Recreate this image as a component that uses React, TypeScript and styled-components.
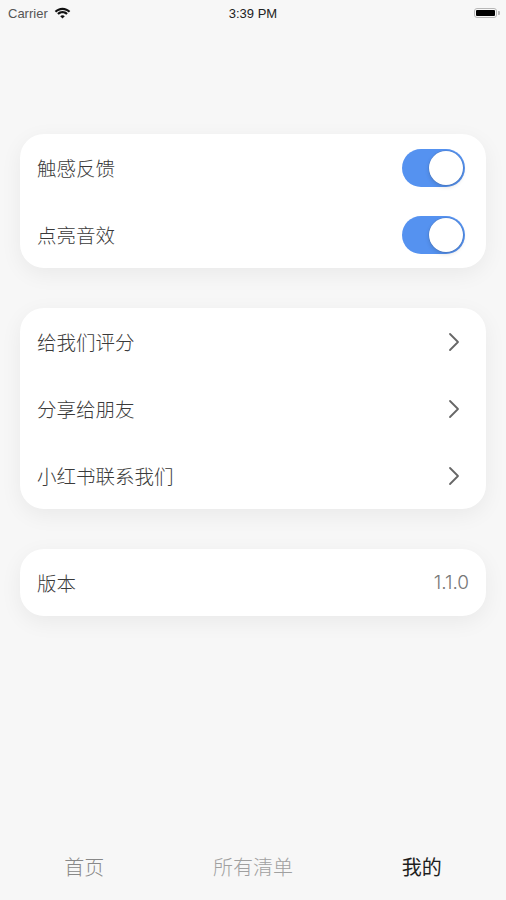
import styled, { createGlobalStyle } from 'styled-components';

const GlobalStyle = createGlobalStyle`
    html, body {
        margin: 0;
        padding: 0;
        background: #f7f7f7;
    }
    body {
        font-family: "Inter", "Noto Sans CJK SC", sans-serif;
    }
`;

const StyledPage = styled.div`
    width: 506px;
    height: 900px;
    display: flex;
    flex-direction: column;
    background: #f7f7f7;
    overflow: hidden;
`;

const StyledStatusBar = styled.div`
    height: 26px;
    display: grid;
    grid-template-columns: 1fr auto 1fr;
    align-items: center;
    padding: 0 8px;
    font-family: "Liberation Sans", sans-serif;
    font-size: 13px;
    color: #222;
`;

const StyledCarrier = styled.div`
    display: flex;
    align-items: center;
    gap: 6px;
    color: #555;
`;

const StyledTime = styled.div`
    color: #222;
`;

const StyledBatteryWrap = styled.div`
    display: flex;
    justify-content: flex-end;
    padding-right: 1px;
`;

const StyledBattery = styled.div`
    position: relative;
    width: 23px;
    height: 10px;
    border: 1px solid #b8b8b8;
    border-radius: 3px;
    padding: 1px;
    box-sizing: border-box;
    &::before {
        content: '';
        display: block;
        width: 100%;
        height: 100%;
        background: #000;
        border-radius: 1px;
    }
    &::after {
        content: '';
        position: absolute;
        right: -4px;
        top: 2px;
        width: 2px;
        height: 4px;
        background: #b8b8b8;
        border-radius: 0 1px 1px 0;
    }
`;

const StyledContent = styled.div`
    flex: 1;
    display: flex;
    flex-direction: column;
    gap: 40px;
    padding: 108px 20px 0 20px;
`;

const StyledCard = styled.div`
    background: #fff;
    border-radius: 24px;
    box-shadow: 0 6px 22px rgba(0, 0, 0, 0.06);
    display: flex;
    flex-direction: column;
`;

const StyledRow = styled.div`
    height: 67px;
    display: flex;
    align-items: center;
    justify-content: space-between;
    padding: 0 26px 0 17px;
`;

const StyledSwitchRow = styled(StyledRow)`
    padding-right: 20px;
`;

const StyledValueRow = styled(StyledRow)`
    padding-right: 17px;
`;

const StyledLabel = styled.span`
    font-family: "Noto Sans CJK SC", sans-serif;
    font-weight: 300;
    font-size: 19.5px;
    color: #3a3a3a;
`;

const StyledValue = styled.span`
    font-family: "Inter", "Noto Sans", sans-serif;
    font-weight: 300;
    font-size: 19px;
    color: #777;
`;

const StyledSwitch = styled.div<{ $on: boolean }>`
    width: 63px;
    height: 38px;
    border-radius: 19px;
    background: ${p => (p.$on ? '#5592f0' : '#e5e5ea')};
    display: flex;
    align-items: center;
    justify-content: ${p => (p.$on ? 'flex-end' : 'flex-start')};
    padding: 2px;
    box-sizing: border-box;
    margin-right: 1px;
`;

const StyledKnob = styled.div`
    width: 34px;
    height: 34px;
    border-radius: 50%;
    background: #fff;
    box-shadow: 0 0 0 0.5px rgba(0, 0, 0, 0.12), 0 2px 4px rgba(0, 0, 0, 0.15);
`;

const StyledTabBar = styled.div`
    height: 66px;
    box-sizing: border-box;
    padding-top: 21px;
    display: grid;
    grid-template-columns: repeat(3, 1fr);
    align-items: start;
`;

const StyledTab = styled.div<{ $active?: boolean; $tone?: string }>`
    text-align: center;
    font-family: "Noto Sans CJK SC", sans-serif;
    font-weight: ${p => (p.$active ? 400 : 300)};
    font-size: 20px;
    line-height: 24px;
    color: ${p => (p.$active ? '#1e1e1e' : p.$tone || '#888')};
`;

const Chevron = () => (
    <svg width="12" height="20" viewBox="0 0 12 20" fill="none">
        <path d="M2 2 L10 10 L2 18" stroke="#666" strokeWidth="1.8" strokeLinecap="round" strokeLinejoin="round" />
    </svg>
);

const Wifi = () => (
    <svg width="17" height="12" viewBox="0 0 17 12">
        <path d="M8.5 3 C11 3 13.2 4 14.8 5.6 L16.3 4.1 C14.3 2.1 11.5 0.8 8.5 0.8 C5.5 0.8 2.7 2.1 0.7 4.1 L2.2 5.6 C3.8 4 6 3 8.5 3 Z" fill="#111" />
        <path d="M8.5 6.2 C10 6.2 11.3 6.8 12.3 7.8 L13.8 6.3 C12.4 4.9 10.5 4 8.5 4 C6.5 4 4.6 4.9 3.2 6.3 L4.7 7.8 C5.7 6.8 7 6.2 8.5 6.2 Z" fill="#111" />
        <path d="M8.5 11.5 L10.8 9.2 C10.2 8.6 9.4 8.2 8.5 8.2 C7.6 8.2 6.8 8.6 6.2 9.2 Z" fill="#111" />
    </svg>
);

const App = () => {
    return (
        <StyledPage>
            <GlobalStyle />
            <StyledStatusBar>
                <StyledCarrier>
                    Carrier
                    <Wifi />
                </StyledCarrier>
                <StyledTime>3:39 PM</StyledTime>
                <StyledBatteryWrap>
                    <StyledBattery />
                </StyledBatteryWrap>
            </StyledStatusBar>

            <StyledContent>
                <StyledCard>
                    <StyledSwitchRow>
                        <StyledLabel>触感反馈</StyledLabel>
                        <StyledSwitch $on={true}><StyledKnob /></StyledSwitch>
                    </StyledSwitchRow>
                    <StyledSwitchRow>
                        <StyledLabel>点亮音效</StyledLabel>
                        <StyledSwitch $on={true}><StyledKnob /></StyledSwitch>
                    </StyledSwitchRow>
                </StyledCard>

                <StyledCard>
                    <StyledRow>
                        <StyledLabel>给我们评分</StyledLabel>
                        <Chevron />
                    </StyledRow>
                    <StyledRow>
                        <StyledLabel>分享给朋友</StyledLabel>
                        <Chevron />
                    </StyledRow>
                    <StyledRow>
                        <StyledLabel>小红书联系我们</StyledLabel>
                        <Chevron />
                    </StyledRow>
                </StyledCard>

                <StyledCard>
                    <StyledValueRow>
                        <StyledLabel>版本</StyledLabel>
                        <StyledValue>1.1.0</StyledValue>
                    </StyledValueRow>
                </StyledCard>
            </StyledContent>

            <StyledTabBar>
                <StyledTab>首页</StyledTab>
                <StyledTab $tone="#a0a0a0">所有清单</StyledTab>
                <StyledTab $active>我的</StyledTab>
            </StyledTabBar>
        </StyledPage>
    );
};

export default App;
